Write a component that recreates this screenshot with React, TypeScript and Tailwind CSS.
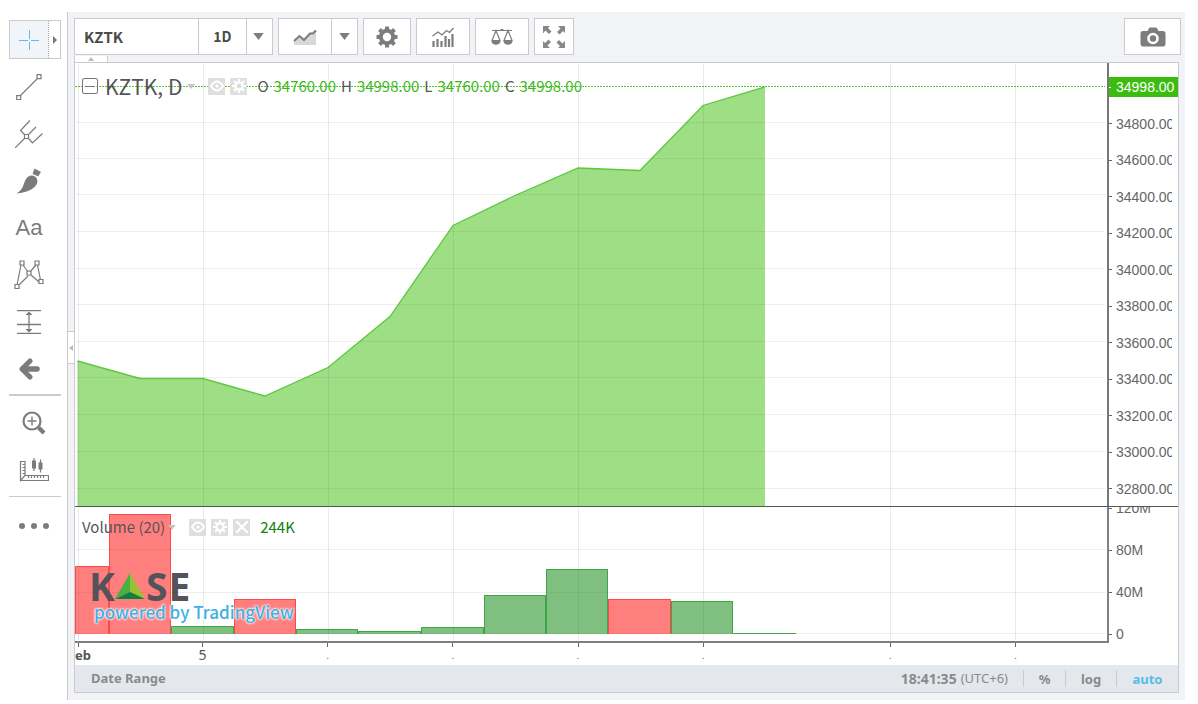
import type { ReactNode } from "react"

const prices = ["34800.00", "34600.00", "34400.00", "34200.00", "34000.00", "33800.00", "33600.00", "33400.00", "33200.00", "33000.00", "32800.00"]
const priceLines = [60, 96, 132, 169, 206, 242, 279, 315, 352, 389, 426]
const dayLines = [3, 128, 253, 378, 503, 628, 815, 940]
const pricePath = "2.5,298 65,315.5 128,315.5 190,333 253,304.5 315,253.5 378,162.5 440,132.5 503,105 565,107.5 628,42.5 690,24"

const volumes = [
  { x: 0, w: 34, top: 59, up: false },
  { x: 34, w: 62, top: 7, up: false },
  { x: 96, w: 63, top: 119, up: true },
  { x: 159, w: 62, top: 92, up: false },
  { x: 221, w: 62, top: 122, up: true },
  { x: 283, w: 63, top: 124, up: true },
  { x: 346, w: 63, top: 120, up: true },
  { x: 409, w: 62, top: 88, up: true },
  { x: 471, w: 62, top: 62, up: true },
  { x: 533, w: 63, top: 92, up: false },
  { x: 596, w: 62, top: 94, up: true },
  { x: 658, w: 63, top: 126, up: true },
]

const quotes = [
  { label: "O", value: "34760.00" },
  { label: "H", value: "34998.00" },
  { label: "L", value: "34760.00" },
  { label: "C", value: "34998.00" },
]

function Caret({ className }: { className: string }) {
  return (
    <svg viewBox="0 0 12 8" className={className} fill="currentColor">
      <path d="M0 0h12L6 8z" />
    </svg>
  )
}

function Tool({ label, children }: { label: string; children: ReactNode }) {
  return (
    <button aria-label={label} className="flex h-[47px] w-[58px] items-center justify-center text-[#7b7b7b]">
      {children}
    </button>
  )
}

function BarButton({ label, className, children }: { label: string; className: string; children: ReactNode }) {
  return (
    <button aria-label={label} className={`flex h-[37px] items-center justify-center border border-[#c9cbcd] bg-white text-[#7d7d7d] ${className}`}>
      {children}
    </button>
  )
}

function LegendButton({ kind }: { kind: "Hide" | "Settings" | "Remove" }) {
  return (
    <button aria-label={kind} className="flex h-[17px] w-[17px] items-center justify-center bg-[#dcdcdc]/90 text-white">
      {kind === "Hide" && (
        <svg viewBox="0 0 14 12" className="h-3 w-[14px]" fill="none" stroke="currentColor" strokeWidth="2">
          <path d="M1 6q6-9 12 0q-6 9-12 0z" />
          <circle cx="7" cy="6" r="1.6" fill="currentColor" stroke="none" />
        </svg>
      )}
      {kind === "Settings" && (
        <svg viewBox="0 0 14 14" className="h-[14px] w-[14px]" fill="none" stroke="currentColor">
          <circle cx="7" cy="7" r="3.6" strokeWidth="2.4" />
          <path d="M7 0v3M7 11v3M0 7h3M11 7h3M2 2l2 2M10 10l2 2M12 2l-2 2M4 10l-2 2" strokeWidth="2.2" />
        </svg>
      )}
      {kind === "Remove" && (
        <svg viewBox="0 0 12 12" className="h-3 w-3" stroke="currentColor" strokeWidth="2.2">
          <path d="M0 0l12 12M12 0L0 12" />
        </svg>
      )}
    </button>
  )
}

function Sidebar() {
  return (
    <aside className="flex w-[67px] shrink-0 flex-col pt-2">
      <div className="ml-[9px] flex h-[39px] w-[52px] border border-[#c9cbcd]">
        <button aria-label="Cross" className="flex w-[39px] items-center justify-center border-r border-dotted border-[#aaa] bg-[#f1f5f9]">
          <svg viewBox="0 0 20 20" className="h-5 w-5" stroke="#5bbfe8">
            <path d="M0 10.500h9M12 10.500h8M10.500 0v9M10.500 12v8" />
          </svg>
        </button>
        <button aria-label="More cursors" className="flex flex-1 items-center justify-center">
          <svg viewBox="0 0 4 8" className="h-2 w-1" fill="#777"><path d="M0 0l4 4-4 4z" /></svg>
        </button>
      </div>
      <div className="mt-1 flex flex-col">
        <Tool label="Trend line">
          <svg viewBox="0 0 26 26" className="h-[26px] w-[26px]" fill="none" stroke="currentColor" strokeWidth="1.2">
            <path d="M4.500 21.500L21.500 4.500M.700 21.700h4v4h-4zM21 .700h4v4h-4z" />
          </svg>
        </Tool>
        <Tool label="Pitchfork">
          <svg viewBox="0 0 28 28" className="h-7 w-7" fill="none" stroke="currentColor" strokeWidth="1.2">
            <path d="M0 28L9.500 18.500M13.500 14.500L21 7M15 .500L5.500 10.500l4 4M13.500 18.500l4 4.500L27.500 13.500M9.500 14.500h4v4h-4z" />
          </svg>
        </Tool>
        <Tool label="Brush">
          <svg viewBox="0 0 26 26" className="h-[26px] w-[26px]" fill="currentColor">
            <path d="M.500 25.500C8 21 7 16 10 11c2-3.500 6-4.500 9-2.500 3.500 2.500 3 7.500-.500 10.500C14 23 8 25 .500 25.500zM18.500.500l6.500 3.500-3 4.500c-2-1-3.500-2-5.500-2.500z" />
          </svg>
        </Tool>
        <Tool label="Text"><span className="font-['Liberation_Sans'] text-[22px]">Aa</span></Tool>
        <Tool label="Patterns">
          <svg viewBox="0 0 30 30" className="h-[30px] w-[30px]" fill="none" stroke="currentColor" strokeWidth="1.2">
            <path d="M3 25L7 5M9 5l5 7M16 12l6-7M23.500 5l3 15M5 25l9-9M17 15l8 7M1 24.500h4v4H1zM6 1h4v4H6zM13 11h4v4h-4zM21 1h4v4h-4zM25 19.500h4v4h-4z" />
          </svg>
        </Tool>
        <Tool label="Prediction">
          <svg viewBox="0 0 24 24" className="h-6 w-6" fill="none" stroke="currentColor" strokeWidth="1.3">
            <path d="M0 .700h24M0 14.500h24M0 23.300h24M12 3v18" />
            <path d="M12 1.500l3.500 3.500h-7zM12 22.500l3.500-3.500h-7z" fill="currentColor" stroke="none" />
          </svg>
        </Tool>
        <Tool label="Arrow">
          <svg viewBox="0 0 22 22" className="h-[22px] w-[22px]" fill="none" stroke="currentColor">
            <path d="M12 3L4 11l8 8" strokeWidth="5" strokeLinecap="round" strokeLinejoin="round" />
            <path d="M5 11h14" strokeWidth="5.500" strokeLinecap="round" />
          </svg>
        </Tool>
      </div>
      <div className="ml-[9px] mt-[2px] h-[2px] w-[52px] bg-[#c9cbcd]" />
      <div className="ml-[5px] mt-[3px]">
        <Tool label="Zoom in">
          <svg viewBox="0 0 24 24" className="h-6 w-6" fill="none" stroke="currentColor">
            <circle cx="10" cy="10" r="8.500" strokeWidth="2.200" />
            <path d="M10 5.500v9M5.500 10h9" strokeWidth="1.4" />
            <path d="M16.500 16.500l5.500 5.500" strokeWidth="4.200" />
          </svg>
        </Tool>
        <Tool label="Measure">
          <svg viewBox="0 0 30 24" className="h-6 w-[30px]" fill="none" stroke="currentColor" strokeWidth="1.200">
            <path d="M1.500 3.500h4.500v14L1.500 22.500zM1.500 22.500h28v-5H6M3.500 6.500H6M3.500 9.500H6M3.500 12.500H6M3.500 15.500H6M9.500 17.500v2.500M12.500 17.500v2.500M15.500 17.500v2.500M18.500 17.500v2.500M21.500 17.500v2.500M24.500 17.500v2.500" />
            <path d="M15 0v13M21.500 1.500v13" />
            <path d="M13 2.500h4v8h-4zM19.500 4.500h4v7h-4z" fill="currentColor" stroke="none" />
          </svg>
        </Tool>
      </div>
      <div className="ml-[9px] mt-[3px] h-px w-[52px] bg-[#c9cbcd]" />
      <div className="ml-[5px] mt-[5px]">
        <Tool label="More">
          <svg viewBox="0 0 30 6" className="h-[6px] w-[30px]" fill="currentColor">
            <circle cx="3" cy="3" r="3" /><circle cx="15" cy="3" r="3" /><circle cx="27" cy="3" r="3" />
          </svg>
        </Tool>
      </div>
    </aside>
  )
}

function Toolbar() {
  return (
    <header className="flex gap-[5px] pr-1 pt-[6px]">
      <div className="flex">
        <input aria-label="Symbol" defaultValue="KZTK" className="h-[37px] w-[125px] border border-[#c9cbcd] bg-white px-[9px] font-['Noto_Sans_CJK_SC',sans-serif] text-[15px] font-bold text-[#4a4a4a] outline-none" />
        <BarButton label="Interval" className="-ml-px w-[49px]">
          <span className="font-['Noto_Sans_CJK_SC',sans-serif] text-[14px] font-bold text-[#4a4a4a]">1D</span>
        </BarButton>
        <BarButton label="Choose interval" className="-ml-px w-[27px] pr-[2px]"><Caret className="h-[7px] w-[11px]" /></BarButton>
      </div>
      <div className="flex">
        <BarButton label="Chart style" className="w-[54px]">
          <svg viewBox="0 0 24 18" className="h-[18px] w-6" fill="none">
            <path d="M1 13l6-5 4 4 6-7 6-3v15H1z" fill="#d8d8d8" />
            <path d="M1 13l5.500-5 4.500 4 6-6.500h3l3-3" stroke="currentColor" strokeWidth="2" />
          </svg>
        </BarButton>
        <BarButton label="Choose chart style" className="-ml-px w-[27px]"><Caret className="h-[7px] w-[11px]" /></BarButton>
      </div>
      <BarButton label="Settings" className="w-12">
        <svg viewBox="0 0 22 22" className="h-[22px] w-[22px]" fill="none" stroke="currentColor">
          <circle cx="11" cy="11" r="6.200" strokeWidth="4" />
          <path d="M11 .500v4M11 17.500v4M.500 11h4M17.500 11h4M3.500 3.500l3 3M15.500 15.500l3 3M18.500 3.500l-3 3M6.500 15.500l-3 3" strokeWidth="4" />
        </svg>
      </BarButton>
      <BarButton label="Indicators" className="w-[54px]">
        <svg viewBox="0 0 22 20" className="h-5 w-[22px]" fill="none" stroke="currentColor">
          <path d="M.500 9L6 5l4 3 4.500-4.500 3 2L21.500 1" strokeWidth="1.3" />
          <path d="M1.500 20v-6M5.500 20v-8M9.500 20v-6M13.500 20V9M17 20v-8M20.500 20V7" strokeWidth="2.200" />
        </svg>
      </BarButton>
      <BarButton label="Compare" className="w-[54px]">
        <svg viewBox="0 0 22 18" className="h-[18px] w-[22px]" fill="none" stroke="currentColor" strokeWidth="1.2">
          <path d="M1 2.500h20M9.500 1.500h3M5 2.500l-4 10h8zM17 2.500l-4 10h8z" />
          <path d="M.500 13h9c0 5-9 5-9 0zM12.500 13h9c0 5-9 5-9 0z" fill="currentColor" stroke="none" />
        </svg>
      </BarButton>
      <BarButton label="Full screen" className="w-10">
        <svg viewBox="0 0 22 22" className="h-[22px] w-[22px]" fill="#888">
          <path d="M0 0h7L5 2l3.500 3.500-2.500 2.500L2.500 4.500.500 7 0 7zM22 0v7l-2-2-3.500 3.500L14 6l3.500-3.500L15 0zM0 22v-7l2 2 3.500-3.500L8 16l-3.500 3.500L7 22zM22 22h-7l2-2-3.500-3.500L16 14l3.500 3.500L22 15z" />
        </svg>
      </BarButton>
      <BarButton label="Snapshot" className="ml-auto w-[57px]">
        <svg viewBox="0 0 26 20" className="h-5 w-[26px]" fill="currentColor">
          <path d="M3 4h4.500L9.500.500h7L18.500 4H23q2.500 0 2.500 2.500v10Q25.500 19.500 23 19.500H3Q.500 19.500.500 16.500v-10Q.500 4 3 4z" />
          <circle cx="13" cy="11.500" r="4.500" fill="none" stroke="white" strokeWidth="2.600" />
        </svg>
      </BarButton>
    </header>
  )
}

function PricePane() {
  return (
    <section className="flex min-h-0 flex-1">
      <div className="relative min-w-0 flex-1 border-r-2 border-[#777]">
        <svg viewBox="0 0 1032 443" preserveAspectRatio="none" className="block h-full w-full">
          <polygon points={`${pricePath} 690,443 2.5,443`} fill="#9ede85" />
          <polyline points={pricePath} fill="none" stroke="#5cc93c" strokeWidth="1.3" />
          {priceLines.map((y) => (
            <rect key={y} x="1" y={y - 1} width="1029" height="1" fill="#555" opacity="0.1" />
          ))}
          {dayLines.map((x) => (
            <rect key={x} x={x} y="1" width="1" height="442" fill="#555" opacity="0.12" />
          ))}
          <path d="M0 23.500H1030" stroke="#4fc92e" strokeDasharray="2 1" />
        </svg>
        <div className="absolute left-[7px] top-[11px] flex h-6 items-center whitespace-nowrap font-['Noto_Sans_CJK_SC',sans-serif] text-[#555]">
          <button aria-label="Collapse" className="flex h-4 w-4 items-center justify-center rounded-xs border border-[#777] bg-white/60">
            <span className="h-px w-[10px] bg-[#777]" />
          </button>
          <h1 className="ml-[7px] text-[21px] leading-6">KZTK, D</h1>
          <Caret className="ml-1 h-[5px] w-[10px] text-[#c4c4c4]" />
          <div className="ml-3 flex gap-[5px]">
            <LegendButton kind="Hide" />
            <LegendButton kind="Settings" />
          </div>
          <dl className="ml-[10px] flex gap-[5px] text-[15px] leading-6">
            {quotes.map((q) => (
              <div key={q.label} className="flex gap-[5px]">
                <dt>{q.label}</dt>
                <dd className="text-[#3fb71c]">{q.value}</dd>
              </div>
            ))}
          </dl>
        </div>
      </div>
      <div className="flex w-[69px] flex-col justify-between pb-[7px] pt-[14px] font-['Liberation_Sans',sans-serif] text-[14px] leading-5 text-[#666]">
        <div className="-ml-[2px] flex items-center bg-[#3cbc0f] text-white">
          <span className="h-px w-1 bg-white" />
          <span className="ml-[5px]">34998.00</span>
        </div>
        {prices.map((p) => (
          <div key={p} className="flex items-center">
            <span className="h-px w-[3px] bg-[#666]" />
            <span className="ml-1 w-14 overflow-hidden">{p}</span>
          </div>
        ))}
      </div>
    </section>
  )
}

function Logo() {
  return (
    <div className="absolute left-[14px] top-[61px]">
      <div className="flex items-end font-['Open_Sans',sans-serif] text-[39px] font-bold leading-9 text-[#555359]">
        <span>K</span>
        <svg viewBox="0 0 30 26" className="mb-[5px] mr-px h-[26px] w-[30px]">
          <path d="M15 0L0 26l15-7z" fill="#4bb044" />
          <path d="M15 0l15 26-15-7z" fill="#97c330" />
          <path d="M0 26l15-7 15 7z" fill="#0c8140" />
        </svg>
        <span>S</span>
        <span className="ml-px">E</span>
      </div>
      <a href="#" className="-mt-[2px] ml-[5px] block whitespace-nowrap font-['Noto_Sans_CJK_SC',sans-serif] text-[17px] font-medium leading-5 text-[#3fb0e3] [text-shadow:0_0_2px_#fff,0_0_2px_#fff,0_0_3px_#fff]">
        powered by TradingView
      </a>
    </div>
  )
}

function VolumePane() {
  return (
    <section className="flex h-[136px] shrink-0">
      <div className="relative min-w-0 flex-1 border-b-2 border-r-2 border-[#808080]">
        <svg viewBox="0 0 1032 134" preserveAspectRatio="none" className="block h-full w-full">
          {[42, 85, 126].map((y) => (
            <rect key={y} x="1" y={y} width="1029" height="1" fill="#555" opacity="0.1" />
          ))}
          {dayLines.map((x) => (
            <rect key={x} x={x} y="1" width="1" height="132" fill="#555" opacity="0.12" />
          ))}
          {volumes.map((v) => (
            <g key={v.x}>
              <rect x={v.x} y={v.top} width={v.w} height={127 - v.top} fill={v.up ? "#008000" : "#ff0000"} opacity="0.5" />
              <path d={`M${v.x + 0.5} 127V${v.top + 0.5}h${v.w - 1}V127`} fill="none" stroke={v.up ? "#2f9e3b" : "#ff3b3b"} opacity="0.8" />
            </g>
          ))}
        </svg>
        <Logo />
        <div className="absolute left-[7px] top-2 flex h-6 items-center whitespace-nowrap font-['Noto_Sans_CJK_SC',sans-serif] text-[15px] leading-6 text-[#555]">
          <h2>Volume (20)</h2>
          <Caret className="ml-[2px] h-[5px] w-[10px] text-[#c4c4c4]" />
          <div className="ml-3 flex gap-[5px]">
            <LegendButton kind="Hide" />
            <LegendButton kind="Settings" />
            <LegendButton kind="Remove" />
          </div>
          <span className="ml-[10px] text-[#128012]">244K</span>
        </div>
      </div>
      <div className="w-[69px] overflow-hidden font-['Liberation_Sans',sans-serif] text-[14px] leading-5 text-[#666]">
        <div className="-mt-[9px] flex flex-col gap-[22px]">
          {["120M", "80M", "40M", "0"].map((v) => (
            <div key={v} className="flex items-center">
              <span className="h-px w-[3px] bg-[#666]" />
              <span className="ml-1">{v}</span>
            </div>
          ))}
        </div>
      </div>
    </section>
  )
}

function DayLabel({ children }: { children: ReactNode }) {
  return (
    <div className="flex grow-[125] basis-0 flex-col items-center">
      <span className="h-1 w-px bg-[#666]" />
      {children}
    </div>
  )
}

function TimeAxis() {
  const dot = <span className="text-[9px] leading-[18px]">.</span>
  return (
    <div className="flex h-[22px] shrink-0 pr-[70px] text-[14px] leading-4 text-[#555]">
      <div className="grow-[65] basis-0">
        <span className="ml-[3px] block h-1 w-px bg-[#666]" />
        <span className="block text-[13px] font-bold">eb</span>
      </div>
      <DayLabel>5</DayLabel>
      <DayLabel>{dot}</DayLabel>
      <DayLabel>{dot}</DayLabel>
      <DayLabel>{dot}</DayLabel>
      <DayLabel>{dot}</DayLabel>
      <div className="grow-[62] basis-0" />
      <DayLabel>{dot}</DayLabel>
      <DayLabel>{dot}</DayLabel>
      <div className="grow-[30] basis-0" />
    </div>
  )
}

function Footer() {
  return (
    <footer className="flex h-[27px] shrink-0 items-center bg-[#e4e8ed] pl-4 text-[13px] font-bold text-[#8a8a8a]">
      <button>Date Range</button>
      <p className="ml-auto mr-[15px] flex items-center gap-1">
        <time className="text-[14px]">18:41:35</time>
        <span className="font-normal">(UTC+6)</span>
      </p>
      <button className="h-[17px] w-[42px] border-l border-[#c9cbcd] leading-4">%</button>
      <button className="h-[17px] w-[51px] border-l border-[#c9cbcd] leading-4">log</button>
      <button className="h-[17px] w-[62px] border-l border-[#c9cbcd] leading-4 text-[#55bde6]">auto</button>
    </footer>
  )
}

export default function App() {
  return (
    <div className="flex h-screen min-h-[600px] bg-white pb-1 pr-[13px] pt-3 font-['Noto_Sans',sans-serif]">
      <Sidebar />
      <main className="flex min-w-0 flex-1 border-l border-[#c9cbcd] bg-[#f1f3f7]">
        <button aria-label="Hide drawing tools" className="mt-[319px] flex h-[33px] w-[6px] shrink-0 items-center justify-center border-y border-[#c9cbcd] bg-white">
          <svg viewBox="0 0 4 6" className="h-[6px] w-1" fill="#bbb"><path d="M4 0v6L0 3z" /></svg>
        </button>
        <div className="flex min-w-0 flex-1 flex-col">
          <Toolbar />
          <button aria-label="Hide toolbar" className="mt-px flex h-[6px] w-[34px] items-center justify-center border-x border-[#c9cbcd] bg-white">
            <svg viewBox="0 0 6 4" className="h-1 w-[6px]" fill="#bbb"><path d="M0 4h6L3 0z" /></svg>
          </button>
          <div className="mb-[7px] mr-[6px] flex min-h-0 flex-1 flex-col border border-[#c9cbcd] bg-white">
            <PricePane />
            <div className="h-px bg-[#555]" />
            <VolumePane />
            <TimeAxis />
            <Footer />
          </div>
        </div>
      </main>
    </div>
  )
}
